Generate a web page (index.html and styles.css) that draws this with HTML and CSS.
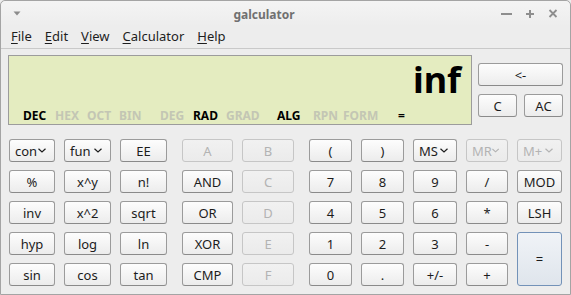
FILE: index.html
```html
<!DOCTYPE html>
<html lang="en">
<head>
    <meta charset="UTF-8">
    <title>galculator</title>
    <link rel="stylesheet" href="styles.css">
</head>
<body>
    <div class="window">
        <div class="titlebar">
            <div class="win-menu">
                <svg width="8" height="5" viewBox="0 0 8 5"><path d="M0.5 0.5 L7.5 0.5 L4 4.5 Z" fill="#8c8c8c"/></svg>
            </div>
            <div class="title">galculator</div>
            <div class="controls">
                <svg width="22" height="22" viewBox="0 0 22 22"><path d="M5 11 H16" stroke="#8e8e8e" stroke-width="2"/></svg>
                <svg width="22" height="22" viewBox="0 0 22 22"><path d="M7 11 H15 M11 7 V15" stroke="#8e8e8e" stroke-width="2"/></svg>
                <svg width="22" height="22" viewBox="0 0 22 22"><path d="M7.5 7 L14.5 14 M14.5 7 L7.5 14" stroke="#8e8e8e" stroke-width="1.8"/></svg>
            </div>
        </div>
        <div class="menubar">
            <span class="menu-item"><u>F</u>ile</span>
            <span class="menu-item"><u>E</u>dit</span>
            <span class="menu-item"><u>V</u>iew</span>
            <span class="menu-item"><u>C</u>alculator</span>
            <span class="menu-item"><u>H</u>elp</span>
        </div>

        <div class="body">
            <div class="top">
                <div class="display">
                    <div class="value">inf</div>
                    <div class="status">
                        <span class="on">DEC</span>
                        <span>HEX</span>
                        <span>OCT</span>
                        <span>BIN</span>
                        <span>DEG</span>
                        <span class="on">RAD</span>
                        <span>GRAD</span>
                        <span class="on">ALG</span>
                        <span>RPN</span>
                        <span>FORM</span>
                        <span class="on">=</span>
                    </div>
                </div>
                <div class="side">
                    <button class="btn">&lt;-</button>
                    <div class="pair">
                        <button class="btn">C</button>
                        <button class="btn">AC</button>
                    </div>
                </div>
            </div>

            <div class="keys">
                <div class="group group-fn">
                    <button class="btn drop">con <svg class="chev" width="8" height="5" viewBox="0 0 8 5"><path d="M0.5 0.8 L4 4 L7.5 0.8" fill="none" stroke="currentColor" stroke-width="1.2"/></svg></button>
                    <button class="btn drop">fun <svg class="chev" width="8" height="5" viewBox="0 0 8 5"><path d="M0.5 0.8 L4 4 L7.5 0.8" fill="none" stroke="currentColor" stroke-width="1.2"/></svg></button>
                    <button class="btn">EE</button>
                    <button class="btn">%</button>
                    <button class="btn">x^y</button>
                    <button class="btn">n!</button>
                    <button class="btn">inv</button>
                    <button class="btn">x^2</button>
                    <button class="btn">sqrt</button>
                    <button class="btn">hyp</button>
                    <button class="btn">log</button>
                    <button class="btn">ln</button>
                    <button class="btn">sin</button>
                    <button class="btn">cos</button>
                    <button class="btn">tan</button>
                </div>
                <div class="group group-logic">
                    <button class="btn off">A</button>
                    <button class="btn off">B</button>
                    <button class="btn">AND</button>
                    <button class="btn off">C</button>
                    <button class="btn">OR</button>
                    <button class="btn off">D</button>
                    <button class="btn">XOR</button>
                    <button class="btn off">E</button>
                    <button class="btn">CMP</button>
                    <button class="btn off">F</button>
                </div>
                <div class="group group-num">
                    <button class="btn">(</button>
                    <button class="btn">)</button>
                    <button class="btn drop">MS<svg class="chev" width="8" height="5" viewBox="0 0 8 5"><path d="M0.5 0.8 L4 4 L7.5 0.8" fill="none" stroke="currentColor" stroke-width="1.2"/></svg></button>
                    <button class="btn drop off">MR<svg class="chev" width="8" height="5" viewBox="0 0 8 5"><path d="M0.5 0.8 L4 4 L7.5 0.8" fill="none" stroke="currentColor" stroke-width="1.2"/></svg></button>
                    <button class="btn drop off">M+<svg class="chev" width="8" height="5" viewBox="0 0 8 5"><path d="M0.5 0.8 L4 4 L7.5 0.8" fill="none" stroke="currentColor" stroke-width="1.2"/></svg></button>
                    <button class="btn">7</button>
                    <button class="btn">8</button>
                    <button class="btn">9</button>
                    <button class="btn">/</button>
                    <button class="btn">MOD</button>
                    <button class="btn">4</button>
                    <button class="btn">5</button>
                    <button class="btn">6</button>
                    <button class="btn">*</button>
                    <button class="btn">LSH</button>
                    <button class="btn">1</button>
                    <button class="btn">2</button>
                    <button class="btn">3</button>
                    <button class="btn">-</button>
                    <button class="btn equals">=</button>
                    <button class="btn">0</button>
                    <button class="btn">.</button>
                    <button class="btn">+/-</button>
                    <button class="btn">+</button>
                </div>
            </div>
        </div>
    </div>
</body>
</html>
```

FILE: styles.css
```css
body {
    margin: 0;
    padding: 0;
    font-family: "Noto Sans", "Open Sans", sans-serif;
    background: #ededed;
    overflow: hidden;
}

.window {
    width: 571px;
    height: 295px;
    box-sizing: border-box;
    border: 1px solid #a4a4a4;
    border-radius: 5px 5px 0 0;
    background: #ededed;
}

/* title bar */
.titlebar {
    height: 25px;
    display: flex;
    align-items: center;
    background: linear-gradient(#f4f4f4, #ededed);
    border-radius: 5px 5px 0 0;
}

.win-menu {
    width: 30px;
    height: 25px;
    display: flex;
    align-items: center;
    justify-content: center;
    padding-left: 1px;
}

.title {
    flex: 1;
    text-align: center;
    font-size: 12px;
    font-weight: bold;
    color: #707070;
    line-height: 25px;
    padding-top: 1px;
}

.controls {
    width: 72px;
    display: flex;
    align-items: center;
    padding-right: 2px;
}

.controls svg {
    margin-right: 1px;
}

/* menu */
.menubar {
    height: 22px;
    display: flex;
    gap: 13px;
    padding-left: 10px;
    border-bottom: 1px solid #c9c9c9;
    font-size: 13px;
    line-height: 20px;
    color: #1e1e1e;
}

.menu-item u {
    text-underline-offset: 2px;
}

/* main area */
.body {
    padding: 6px 0 0 7px;
}

.top {
    display: flex;
    gap: 6px;
}

.display {
    width: 464px;
    height: 70px;
    box-sizing: border-box;
    border: 1px solid #9c9c9c;
    background: #e4ecc0;
    padding: 6px 10px 0 14px;
}

.value {
    text-align: right;
    font-size: 36px;
    font-weight: bold;
    line-height: 36px;
    color: #000;
}

.status {
    margin-top: 11px;
    display: grid;
    grid-template-columns: 32px 32px 32px 41px 33px 33px 51px 36px 30px 55px auto;
    font-size: 12px;
    font-weight: bold;
    line-height: 14px;
    color: #c3c6b4;
}

.status .on {
    color: #000;
}

.side {
    width: 85px;
    display: flex;
    flex-direction: column;
    justify-content: center;
    gap: 8px;
}

.pair {
    display: flex;
    gap: 7px;
}

.pair .btn {
    flex: 1;
}

/* buttons */
.btn {
    height: 23px;
    padding: 0;
    box-sizing: border-box;
    border: 1px solid #9b9b9b;
    border-bottom-color: #8a8a8a;
    border-radius: 3px;
    background: linear-gradient(#fdfdfd, #ececec);
    font-family: "Noto Sans", "Open Sans", sans-serif;
    font-size: 13px;
    color: #1c1c1c;
    line-height: 20px;
    text-align: center;
}

.btn.off {
    border-color: #c6c6c6;
    background: linear-gradient(#f1f1f1, #ebebeb);
    color: #b3b3b3;
}

.btn.drop {
    display: flex;
    align-items: center;
    justify-content: space-between;
    padding: 0 8px 0 5px;
}

.chev {
    display: block;
}

.btn.equals {
    grid-row: span 2;
    height: 54px;
    border-color: #7392b8;
    background: linear-gradient(#f0f3f7, #dfe5ec);
}

.keys {
    display: flex;
    gap: 15px;
    margin: 14px 0 0 1px;
}

.group {
    display: grid;
    grid-auto-rows: 23px;
    row-gap: 8px;
    column-gap: 9px;
}

.group-fn {
    grid-template-columns: 46px 47px 47px;
}

.group-logic {
    grid-template-columns: 51px 52px;
}

.group-num {
    grid-template-columns: 43px 43px 44px 42px 45px;
}
```
